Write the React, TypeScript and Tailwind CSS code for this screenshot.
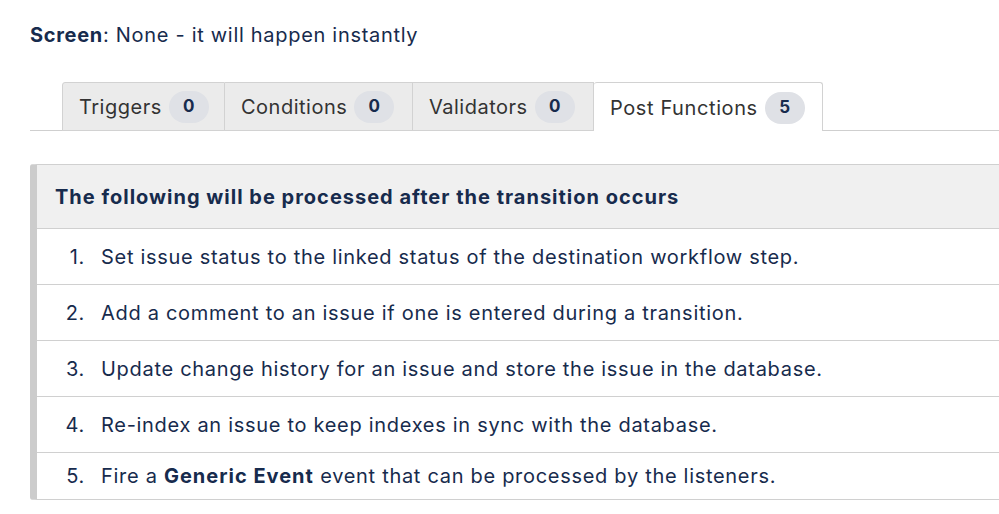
import React from "react";

const tabs = [
  { label: "Triggers", count: 0, w: "w-[163px]" },
  { label: "Conditions", count: 0, w: "w-[188px]" },
  { label: "Validators", count: 0, w: "w-[181px]" },
];

export default function App() {
  return (
    <div
      className="w-[999px] h-[514px] bg-white overflow-hidden text-[#172b4d] tracking-[0.7px]"
      style={{ fontFamily: "Inter, 'Noto Sans', sans-serif" }}
    >
      <div className="pl-[30px] pt-[21px] text-[20px] leading-[28px]">
        <span className="font-bold">Screen</span>: None - it will happen instantly
      </div>

      <div className="ml-[30px] mt-[33px] flex border-b border-[#cfcfcf] pl-[32px] h-[49px]">
        {tabs.map((t) => (
          <div
            key={t.label}
            className={`${t.w} h-[49px] flex items-center pl-[16px] pt-[1px] bg-[#ebebeb] border border-[#d2d2d2] border-l-0 first:border-l first:rounded-tl-[3px] text-[#333333] text-[20px] tracking-[0.5px]`}
          >
            <span>{t.label}</span>
            <span className="ml-[7px] w-[40px] h-[32px] rounded-full bg-[#dfe1e6] flex items-center justify-center text-[17px] font-bold text-[#172b4d] tracking-normal">
              {t.count}
            </span>
          </div>
        ))}
        <div className="w-[229px] h-[49px] mb-[-1px] flex items-center pl-[16px] pt-[1px] bg-white border border-[#d2d2d2] border-b-0 border-l-0 rounded-t-[3px] text-[#333333] text-[20px] tracking-[0.6px]">
          <span>Post Functions</span>
          <span className="ml-[7px] w-[40px] h-[32px] rounded-full bg-[#dfe1e6] flex items-center justify-center text-[17px] font-bold text-[#172b4d] tracking-normal">
            5
          </span>
        </div>
      </div>

      <div className="ml-[30px] mt-[33px] w-[1000px] border border-[#d0d0d0] border-l-[7px] border-l-[#cccccc] rounded-l-[3px]">
        <div className="h-[64px] bg-[#f0f0f0] flex items-center pl-[18px] text-[20px] font-bold tracking-[1px] border-b border-[#d0d0d0]">
          The following will be processed after the transition occurs
        </div>
        {[
          <>Set issue status to the linked status of the destination workflow step.</>,
          <>Add a comment to an issue if one is entered during a transition.</>,
          <>Update change history for an issue and store the issue in the database.</>,
          <>Re-index an issue to keep indexes in sync with the database.</>,
          <>
            Fire a <span className="font-bold tracking-[1px]">Generic Event</span> event that can be processed by the listeners.
          </>,
        ].map((c, i, arr) => (
          <div
            key={i}
            className={`flex items-center text-[20px] ${i === arr.length - 1 ? "h-[46px]" : "h-[56px] border-b border-[#d0d0d0]"}`}
          >
            <span className="w-[64px] text-right pr-[16px] shrink-0">{i + 1}.</span>
            <span>{c}</span>
          </div>
        ))}
      </div>
    </div>
  );
}
